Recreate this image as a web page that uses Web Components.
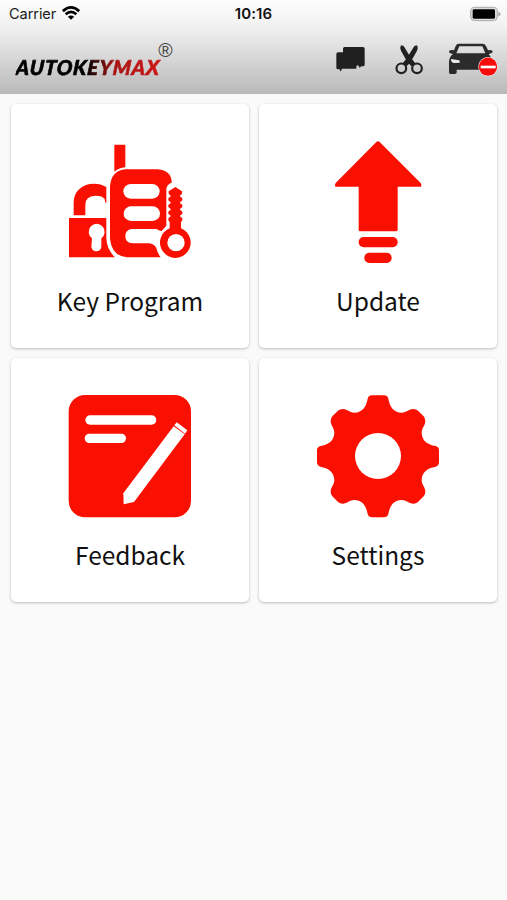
<!DOCTYPE html>
<html lang="en">
<head>
<meta charset="utf-8">
<title>AutoKeyMax</title>
<style>
    body {
        margin: 0;
        background: #fafafa;
        font-family: "Noto Sans CJK SC", "Noto Sans", sans-serif;
        color: #111;
    }
</style>
</head>
<body>
<home-screen></home-screen>

<script>
class StatusBar extends HTMLElement {
    _template = `
    <style>
        :host {
            display: flex;
            align-items: center;
            height: 28px;
            padding: 0 6px;
            font: 15px/28px Inter, sans-serif;
            color: #1c1c1c;
        }
        .side { flex: 1; display: flex; align-items: center; }
        .carrier { margin-left: 3px; font-size: 14.6px; letter-spacing: -.1px; }
        .wifi { margin-left: 6px; margin-top: -2px; }
        .time { font-weight: 600; font-size: 15px; letter-spacing: .1px; color: #111; }
        .right { justify-content: flex-end; }
        svg { display: block; }
    </style>
    <div class="side">
        <span class="carrier">Carrier</span>
        <svg class="wifi" width="18" height="14" viewBox="0 0 54 42">
            <g fill="none" stroke="#000" stroke-width="8">
                <path d="M2.500 15.500Q27-7 51.500 15.500"/>
                <path d="M11 25Q27 10 43 25"/>
            </g>
            <path d="M17.500 32.500Q27 24 36.500 32.500L27 41Z"/>
        </svg>
    </div>
    <span class="time">10:16</span>
    <div class="side right">
        <svg width="31" height="16" viewBox="0 0 93 48">
            <rect x="2" y="4" width="80" height="40" rx="12" fill="#ddd" stroke="#aaa" stroke-width="3"/>
            <rect x="8" y="10" width="67" height="28" rx="4"/>
            <path d="M85 17q7 2 7 7t-7 7z" fill="#aaa"/>
        </svg>
    </div>
    `;

    constructor() {
        super();
        this.attachShadow({ mode: 'open' }).innerHTML = this._template;
    }
}

class BrandLogo extends HTMLElement {
    _template = `
    <style>
        :host { display: flex; align-items: flex-start; height: 42px; }
        .name {
            margin-top: 13px;
            font: italic 900 20.500px/28px Lato, sans-serif;
            letter-spacing: .85px;
            padding-right: 3px;
            background: linear-gradient(90deg, #000 48%, #a81414 66%, #d01818);
            -webkit-background-clip: text;
            background-clip: text;
            color: transparent;
            -webkit-text-stroke: .6px transparent;
            transform: skewX(-5deg);
        }
        .mark {
            margin: 0 0 0 -5px;
            font: 19.500px/20px "Liberation Sans", sans-serif;
            color: #444;
        }
    </style>
    <span class="name"><slot></slot></span><span class="mark">®</span>
    `;

    constructor() {
        super();
        this.attachShadow({ mode: 'open' }).innerHTML = this._template;
    }
}

class AppHeader extends HTMLElement {
    _template = `
    <style>
        :host {
            display: block;
            height: 94px;
            background: linear-gradient(#fefefe, #f0f0f0 30%, #b9b9b9);
        }
        .bar { display: flex; justify-content: space-between; padding: 12px 9px 0 16px; }
        .tools { display: flex; align-items: flex-start; }
        .chat { margin-right: 29px; }
        .cut { margin-right: 25px; }
        svg { display: block; }
    </style>
    <status-bar></status-bar>
    <div class="bar">
        <brand-logo>AUTOKEYMAX</brand-logo>
        <div class="tools">
            <svg class="chat" width="30" height="38" viewBox="48 120 90 114" fill="#202020">
                <path d="M74 141H129Q134 141 134 146V194Q134 199 129 199H124L118 204V200L112 195L109 200V206H66L62 215L59 208H54Q49 208 49 203V162Q49 157 54 157H69V146Q69 141 74 141Z"/>
            </svg>
            <svg class="cut" width="28" height="38" viewBox="225 120 84 114">
                <g fill="#202020">
                    <path d="M243 136L251 138L273 174L286 190L274 199L262 186L243 152Q239 142 243 136Z"/>
                    <path d="M291 136L283 138L261 174L248 190L260 199L272 186L291 152Q295 142 291 136Z"/>
                </g>
                <g fill="none" stroke="#202020" stroke-width="6.500">
                    <circle cx="244" cy="205" r="14.500"/>
                    <circle cx="291" cy="205" r="14.500"/>
                </g>
            </svg>
            <svg width="50" height="38" viewBox="384 120 150 114">
                <path fill="#2b2b2b" fill-rule="evenodd" d="M416 131H487Q495 131 498 138L504 151Q514 148 518 154Q518 160 506 162Q516 174 516 190V209H410V217Q410 222 405 222H392Q387 222 387 217V184Q389 169 399 162Q386 160 387 154Q391 148 402 151L407 138Q410 131 416 131ZM418 139L409 160H496L487 139Z"/>
                <path fill="#eee" d="M393 177L417 181Q421 183 419 188L401 189Q393 187 393 177Z"/>
                <circle cx="504" cy="200" r="29" fill="#fff3f3"/>
                <circle cx="504" cy="200" r="27.500" fill="#f70b0b"/>
                <path d="M482 201H527" stroke="#fff" stroke-width="8"/>
            </svg>
        </div>
    </div>
    `;

    constructor() {
        super();
        this.attachShadow({ mode: 'open' }).innerHTML = this._template;
    }
}

class MenuCard extends HTMLElement {
    _template = `
    <style>
        :host {
            display: flex;
            flex-direction: column;
            align-items: center;
            box-sizing: border-box;
            height: 244px;
            padding-top: 36px;
            background: #fff;
            border-radius: 5px;
            box-shadow: 0 1px 3px rgba(0, 0, 0, .25);
        }
        .icon { height: 124px; }
        .label { margin-top: 18px; font-size: 24.500px; line-height: 38px; }
    </style>
    <div class="icon"><slot name="icon"></slot></div>
    <div class="label"><slot></slot></div>
    `;

    constructor() {
        super();
        this.attachShadow({ mode: 'open' }).innerHTML = this._template;
    }
}

class HomeScreen extends HTMLElement {
    _template = `
    <style>
        :host { display: block; min-height: 100vh; }
        .grid {
            display: grid;
            grid-template-columns: 1fr 1fr;
            gap: 10px;
            padding: 10px 10px 10px 11px;
        }
        svg { display: block; width: 124px; height: 124px; fill: #fa1000; }
        .hole { fill: #fff; }
    </style>
    <app-header></app-header>
    <main class="grid">
        <menu-card>
            <svg slot="icon" viewBox="39 30 372 372">
                <path d="M178 44H211V112Q190 114 178 125Z"/>
                <path d="M56 256V218C56 183 82 161 117 161Q138 161 154 171V220Q149 216 149 207Q143 197 121 197Q91 198 91 224V256Z"/>
                <path d="M42 264H154V325Q155 358 180 382H42Z"/>
                <path d="M212 118H308Q350 122 350 158Q334 163 334 180V287L320 303Q312 303 305 297H228Q211 302 211 318Q211 339 232 340H281Q299 342 304 354Q308 371 317 382H215Q170 377 165 326V170Q168 122 212 118Z"/>
                <g class="hole">
                    <rect x="205" y="162" width="109" height="44" rx="22"/>
                    <rect x="206" y="229" width="109" height="44" rx="22"/>
                    <path d="M111 325A24 24 0 1 1 139 325V351Q136 364 124 364T109 351Z"/>
                </g>
                <path d="M361 171L381 184V191L374 198L382 205V211L374 218L382 225V231L374 238L382 245V251L374 258L382 265V271L378 276V295A46 46 0 1 1 344 295V276L340 271V265L348 258L340 251V245L348 238L340 231V225L348 218L340 211V205L348 198L341 191V184Z"/>
                <circle class="hole" cx="363" cy="338" r="26"/>
            </svg>
            Key Program
        </menu-card>
        <menu-card>
            <svg slot="icon" viewBox="18 30 372 372">
                <path d="M199 36Q204 31 209 36L332 159Q336 164 333 170H263V299Q263 304 258 304H151Q146 304 146 299V170H76Q73 164 77 159Z"/>
                <rect x="146" y="321" width="117" height="31" rx="15"/>
                <rect x="163" y="368" width="82" height="31" rx="15"/>
            </svg>
            Update
        </menu-card>
        <menu-card>
            <svg slot="icon" viewBox="39 27 372 372">
                <rect x="41" y="30" width="367" height="367" rx="49"/>
                <g class="hole">
                    <rect x="91" y="91" width="213" height="28" rx="14"/>
                    <rect x="89" y="146" width="124" height="28" rx="14"/>
                    <path d="M356 124L389 148L237 351L206 358L205 325Z"/>
                    <path d="M365 112L397 136L390 146L358 121Z"/>
                </g>
            </svg>
            Feedback
        </menu-card>
        <menu-card>
            <svg slot="icon" viewBox="33 27 372 372">
                <defs>
                    <path id="quarter" d="M-2 2V-183H18Q28 -183 31 -173C36 -148 46 -132 71 -131C86 -131 92 -142 106 -142Q114 -142 120 -137L137 -120Q142 -114 142 -106C142 -92 131 -86 131 -71C132 -46 148 -36 173 -31Q183 -28 183 -18V2Z"/>
                </defs>
                <g transform="translate(219 214)">
                    <use href="#quarter"/>
                    <use href="#quarter" transform="rotate(90)"/>
                    <use href="#quarter" transform="rotate(180)"/>
                    <use href="#quarter" transform="rotate(270)"/>
                </g>
                <circle class="hole" cx="219" cy="213" r="69"/>
            </svg>
            Settings
        </menu-card>
    </main>
    `;

    constructor() {
        super();
        this.attachShadow({ mode: 'open' }).innerHTML = this._template;
    }
}

window.customElements.define('status-bar', StatusBar);
window.customElements.define('brand-logo', BrandLogo);
window.customElements.define('app-header', AppHeader);
window.customElements.define('menu-card', MenuCard);
window.customElements.define('home-screen', HomeScreen);
</script>
</body>
</html>
